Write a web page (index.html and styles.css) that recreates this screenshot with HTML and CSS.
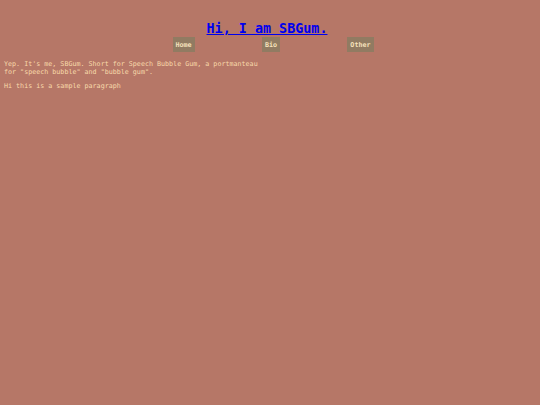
FILE: index.html
```html
<!DOCTYPE html>
<html>
<head>
<meta charset="utf-8">
<link rel="stylesheet" href="styles.css">
</head>
<body>
<header class="site-header">
  <h1 class="title"><a class="title-link" href="#">Hi, I am SBGum.</a></h1>
  <nav class="nav">
    <a class="nav-btn" href="#">Home</a>
    <a class="nav-btn" href="#">Bio</a>
    <a class="nav-btn" href="#">Other</a>
  </nav>
</header>
<main class="content">
  <p class="para">Yep. It's me, SBGum. Short for Speech Bubble Gum, a portmanteau for "speech bubble" and "bubble gum".</p>
  <p class="para">Hi this is a sample paragraph</p>
</main>
</body>
</html>
```

FILE: styles.css
```css
html, body {
  background: #b67767;
}
body {
  margin: 0;
  padding: 5px 4px;
  font-family: "DejaVu Sans Mono", monospace;
  font-size: 6.7px;
  line-height: 8px;
  color: #f8d9aa;
}
.site-header {
  display: flex;
  flex-direction: column;
  align-items: center;
}
.title {
  margin: 16px 6px 0 0;
  font-size: 13.4px;
  line-height: 16px;
  font-weight: bold;
}
.title-link {
  color: #0000ee;
}
.nav {
  display: flex;
  justify-content: space-between;
  width: 201px;
  margin-left: 6px;
}
.nav-btn {
  display: block;
  background: #917b62;
  color: #f6e2bc;
  font-weight: bold;
  text-decoration: none;
  padding: 3.5px 3px;
}
.content {
  margin-top: 8px;
}
.para {
  width: 262px;
  margin: 0 0 6px 0;
}
```
